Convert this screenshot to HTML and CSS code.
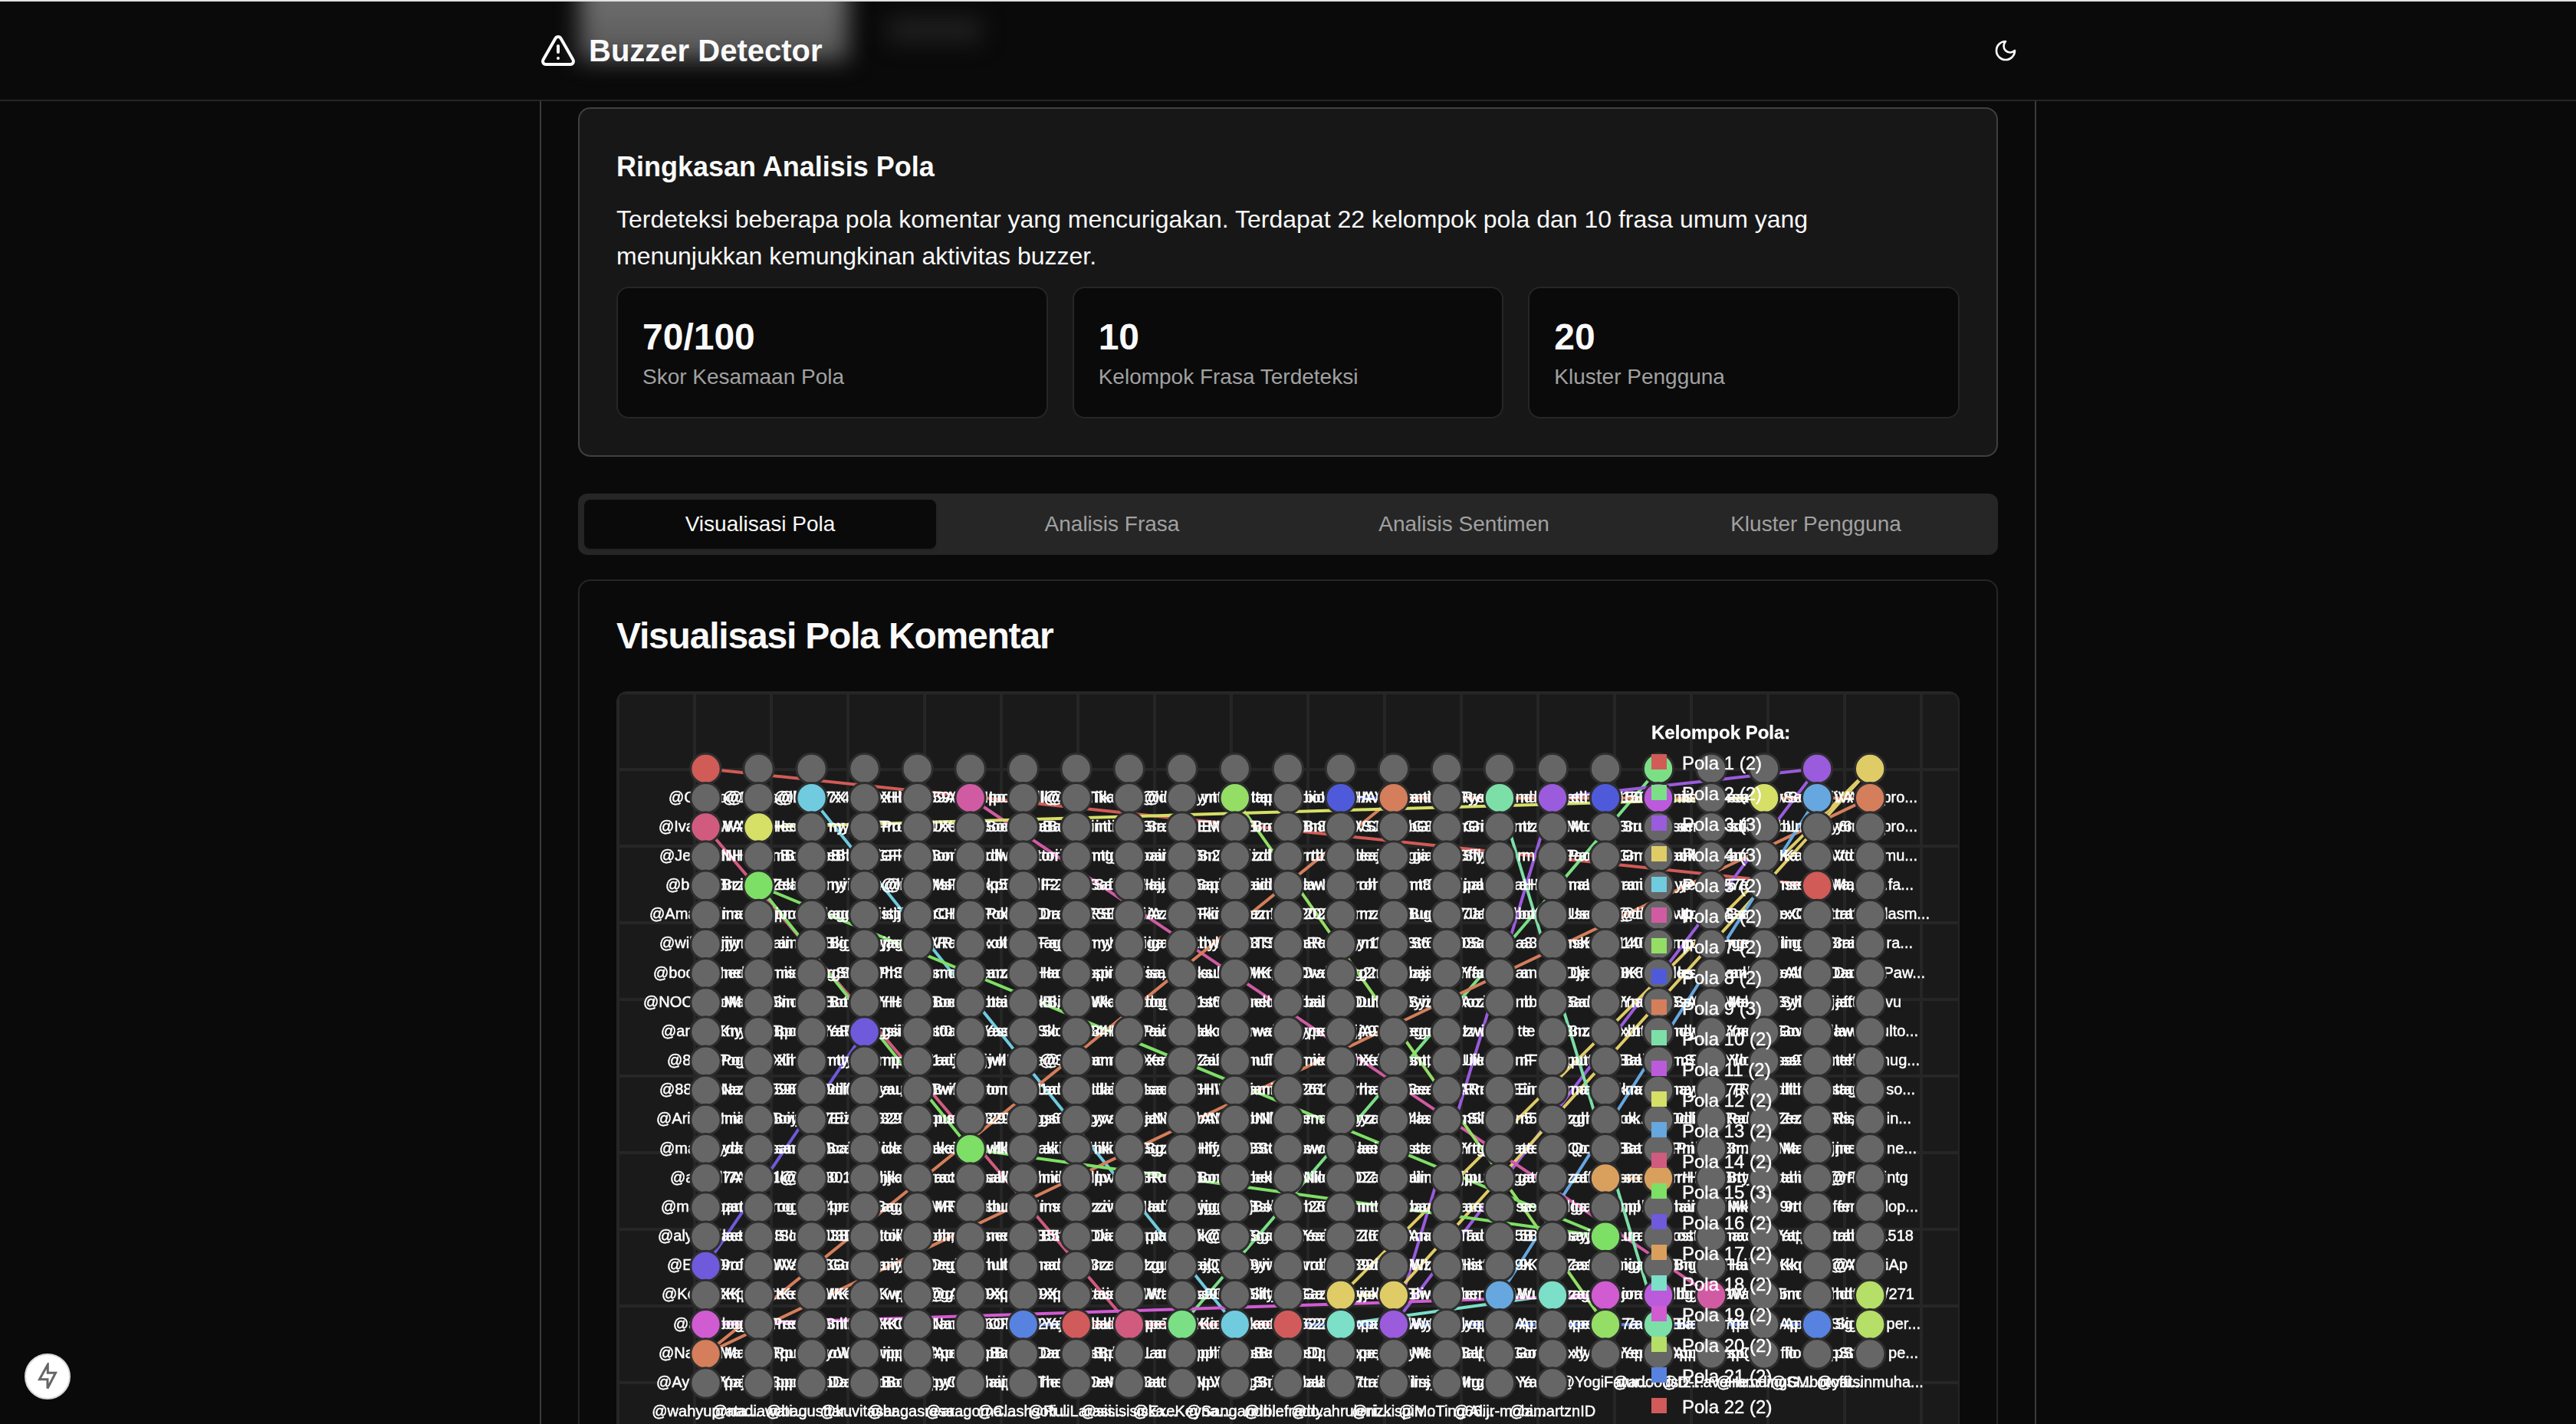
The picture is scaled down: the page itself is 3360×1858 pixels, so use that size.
FILE: index.html
```html
<!DOCTYPE html>
<html lang="id">
<head>
<meta charset="utf-8">
<title>Buzzer Detector</title>
<link rel="stylesheet" href="styles.css">
</head>
<body>
<header class="header">
  <div class="backdrop"><span class="glow glow-button"></span><span class="glow glow-label"></span></div>
  <div class="header-inner">
    <div class="brand">
      <svg class="brand-icon" viewBox="0 0 24 24" fill="none" stroke="currentColor" stroke-width="2" stroke-linecap="round" stroke-linejoin="round"><path d="m21.73 18-8-14a2 2 0 0 0-3.48 0l-8 14A2 2 0 0 0 4 21h16a2 2 0 0 0 1.73-3"/><path d="M12 9v4"/><path d="M12 17h.01"/></svg>
      <span class="brand-name">Buzzer Detector</span>
    </div>
    <button class="theme" aria-label="Tema"><svg viewBox="0 0 24 24" fill="none" stroke="currentColor" stroke-width="2" stroke-linecap="round" stroke-linejoin="round"><path d="M12 3a6 6 0 0 0 9 9 9 9 0 1 1-9-9Z"/></svg></button>
  </div>
</header>
<main class="content">
  <section class="summary">
    <h3 class="summary-title">Ringkasan Analisis Pola</h3>
    <p class="summary-text">Terdeteksi beberapa pola komentar yang mencurigakan. Terdapat 22 kelompok pola dan 10 frasa umum yang menunjukkan kemungkinan aktivitas buzzer.</p>
    <div class="stats">
      <div class="stat"><div class="stat-value">70/100</div><div class="stat-label">Skor Kesamaan Pola</div></div>
      <div class="stat"><div class="stat-value">10</div><div class="stat-label">Kelompok Frasa Terdeteksi</div></div>
      <div class="stat"><div class="stat-value">20</div><div class="stat-label">Kluster Pengguna</div></div>
    </div>
  </section>
  <nav class="tabs">
    <button class="tab tab-active">Visualisasi Pola</button>
    <button class="tab">Analisis Frasa</button>
    <button class="tab">Analisis Sentimen</button>
    <button class="tab">Kluster Pengguna</button>
  </nav>
  <section class="panel">
    <h2 class="panel-title">Visualisasi Pola Komentar</h2>
    <div class="graph"><svg id="graph" class="graph-svg" viewBox="806 904 1748 1200"></svg></div>
  </section>
</main>
<div class="indicator"><svg viewBox="0 0 28 36" fill="none" stroke="#666" stroke-width="3"><path d="M14.3 2.5 3.5 21.8H14V33.5L24.5 13.2H14.3Z"/></svg></div>
<script src="graph.js"></script>
</body>
</html>
```

FILE: styles.css
```css
* { box-sizing: border-box; margin: 0; }
html { background: #0a0a0a; }
body { height: 1858px; overflow: hidden; position: relative; background: #0a0a0a; color: #fafafa; font-family: "Liberation Sans", Arial, sans-serif; }
button { font: inherit; color: inherit; background: none; border: 0; padding: 0; }
.header { position: relative; height: 132px; border-top: 2px solid #dfe3e3; border-bottom: 2px solid #262626; }
.backdrop { position: absolute; inset: 0; overflow: hidden; }
.glow { position: absolute; }
.glow-button { left: 756px; top: -80px; width: 350px; height: 156px; background: linear-gradient(#6c6c6c 55%, #5e5e5e 80%); filter: blur(15px); }
.glow-label { left: 1158px; top: 20px; width: 122px; height: 34px; background: #1e1e1e; filter: blur(14px); }
.header-inner { position: relative; width: 1952px; height: 128px; margin: 0 auto; display: flex; align-items: center; justify-content: space-between; }
.brand { display: flex; align-items: center; gap: 16px; }
.brand-icon { width: 48px; height: 48px; }
.brand-name { font-size: 40px; font-weight: 700; line-height: 56px; }
.theme { width: 80px; height: 80px; display: flex; align-items: center; justify-content: center; }
.theme svg { width: 32px; height: 32px; }
.content { width: 1952px; height: 1726px; margin: 0 auto; padding: 8px 48px 0; border: solid #3b3b3b; border-width: 0 2px; overflow: hidden; }
.summary { height: 456px; padding: 48px; border: 2px solid #404040; border-radius: 16px; background: #171717; }
.summary-title { font-size: 36px; line-height: 56px; margin-bottom: 16px; }
.summary-text { font-size: 32px; line-height: 48px; margin-bottom: 16px; }
.stats { display: grid; grid-template-columns: repeat(3, 1fr); gap: 32px; }
.stat { padding: 32px; border: 2px solid #262626; border-radius: 16px; background: #0a0a0a; }
.stat-value { font-size: 48px; font-weight: 700; line-height: 64px; }
.stat-label { font-size: 28px; line-height: 40px; color: #a1a1a1; }
.tabs { display: grid; grid-template-columns: repeat(4, 1fr); height: 80px; margin-top: 48px; padding: 8px; border-radius: 12px; background: #262626; }
.tab { font-size: 28px; line-height: 40px; color: #a1a1a1; border-radius: 8px; }
.tab-active { color: #fafafa; background: #0a0a0a; box-shadow: 0 2px 4px rgba(0,0,0,.1); }
.panel { margin-top: 32px; padding: 48px; border: 2px solid #262626; border-radius: 16px; }
.panel-title { font-size: 48px; line-height: 48px; letter-spacing: -1.2px; margin-bottom: 48px; }
.graph { height: 1204px; border: 2px solid #262626; border-radius: 14px; overflow: hidden; background: #1a1a1a; }
.graph-svg { display: block; width: 1748px; height: 1200px; filter: blur(.6px); }
.grid-line { stroke: #262626; stroke-width: 4; }
.link { stroke-width: 4; }
.node { fill: #666; stroke: #2e2e2e; stroke-width: 3; }
.label { font-size: 20px; fill: #fff; stroke: #fff; stroke-width: .5; }
.center { text-anchor: middle; }
.end { text-anchor: end; }
.legend-title { font-size: 24px; font-weight: 700; fill: #fff; stroke: #fff; stroke-width: .3; }
.legend-text { font-size: 24px; fill: #fff; stroke: #fff; stroke-width: .4; }
.indicator { position: absolute; left: 32px; top: 1766px; width: 60px; height: 60px; border-radius: 50%; background: #fff; border: 2px solid #d8d8d8; display: flex; align-items: center; justify-content: center; }
.indicator svg { width: 28px; height: 36px; }
```

FILE: graph.js
```js
const COLORS = ['#d15b56', '#7bdf86', '#9a5bdc', '#dfcc66', '#70cbdf', '#d15ba3', '#94de66', '#4f5ada', '#d47e5b', '#7cdfa8', '#bb5bdc',
  '#d6df66', '#66a7df', '#d15b7e', '#7edf66', '#6e5ada', '#d9a05d', '#7cdfc8', '#d15bd1', '#b5df66', '#5882df', '#d15b5b'];

// Members of each pattern group as [column, row].
const GROUPS = [
  [[0, 0], [21, 4]], [[18, 0], [9, 19]], [[21, 0], [16, 1], [13, 19]], [[22, 0], [12, 18], [13, 18]], [[2, 1], [10, 19]],
  [[5, 1], [19, 18]], [[10, 1], [17, 19]], [[12, 1], [17, 1]], [[13, 1], [22, 1], [0, 20]], [[15, 1], [18, 19]],
  [[18, 1], [18, 18]], [[1, 2], [20, 1]], [[21, 1], [15, 18]], [[0, 2], [8, 19]], [[1, 4], [5, 13], [17, 16]],
  [[3, 9], [0, 17]], [[17, 14], [18, 14]], [[12, 19], [16, 18]], [[0, 19], [17, 18]], [[22, 18], [22, 19]],
  [[6, 19], [21, 19]], [[7, 19], [11, 19]]
];

// Label heads left of the first column: [text, x].
const HEADS = [['@C', 872], ['@Iva', 859], ['@Je', 860], ['@b', 868], ['@Ama', 847], ['@wil', 860], ['@boo', 852], ['@NOC', 839],
  ['@ar', 862], ['@8', 870], ['@88', 860], ['@Ari', 856], ['@ma', 860], ['@a', 874], ['@ma', 862], ['@aly', 858], ['@E', 870],
  ['@Ke', 863], ['@a', 878], ['@Na', 859], ['@Ay', 856]];
// Label tails right of the last column: [text, right x].
const TAILS = [['pro...', 2501], ['pro...', 2501], ['mu...', 2501], ['.fa...', 2496], ['lasm...', 2517], ['ra...', 2495], ['Paw...', 2511],
  ['vu', 2480], ['ulto...', 2502], ['nug...', 2504], ['so...', 2498], ['in...', 2493], ['ne...', 2500], ['intg', 2489], ['lop...', 2502],
  ['1518', 2496], ['iAp', 2488], ['y/271', 2497], ['per...', 2505], ['pe...', 2502]];

// Visible label parts between neighbouring columns, one line per row.
const PARTS = [
  'o@1 s@lk 7X4 XHl 59A Ipo ll@ Tika @id ynt Itap bio! HAV anti Rye nd eth 158 nis rear vSe iVA',
  'WA Hec my, Pro UXe Soe aBa inti Sra IEM Bro Bn8 VSJ bG8 rGri ntz Mo Sru ser sdi bLr y6r',
  'iNH mBo eBh lGFk Boni rdlw tori mtg oair Sn2 izdl rrtb deaj gia Sfly m Pac Gm ank am Ka Vtd',
  'Brzi Zela nyi x@lr MsF kp5 lF2 Saf Haju Sapi aidi law! roh mt3 jpal aH ma! rani ye 57e nse Ma,',
  'ima iprc kagc istji rCH Pok Dra RSE iAz Fkir azn! 202 mz Bug 7Jat bot Use @dr vIp Gse exC trat',
  'rjiyn ain Big yjag VRa xolt Fag my! iga thyl 3TS aRa yn1 St6 0Sa a3 nsK 140 mp nge ling 3rai',
  'Ined mis rgSt PhS smo anz Har spir isa, ksul MKr, Oval g2r bajs Yfar an Dja 8K6 les anl eAlt Dar',
  'oMa Sino Bot YHa Boe btai kBi, Wka dog 1st6 nelc bail Duh Syiz Aozi nb Sad Yna SsA Mel Syli jaft',
  'Kny, Bpo YaR gsii st0a Yass Slc 34H Paic lako nwai ype jA9 ego Izwi te 3nz xbt ndy Yne Gov law',
  'Pog Xih mty mp 1adj jwl! e@S amr Xer Zai! nufi mie hXel snt, Uile nF put Bal mS Ylo ss9 nteh',
  'Naz 596 9dilt yau, Bwi! tom 1ad Idlai Isae SHIV iami 261 rha Seat ARre Ein ma kna nay 7R dlth stag',
  'Imia Boiy 7Eiz 329 pus 329! gs6 gyva jaNi bAN bNll ema ryza 4las nSil n5 zgh ok. 0dil Rad Zez Ris,',
  'yda san Bcai icle akei wllk aki hiki Sgz Hify BStc swc laei sta Yrtg ate Qo Bat Pni 3m: Ma jne',
  'l7A 1l@. 80.1 hjka ract salk hnid lpv BRo, Bon bek Nilo DZa alim jpu gat zaf sro rrH Brty tahi @rF',
  'qart rog 4pra Baga MR sbur ims zziv Iad yjgg jBsk h26 nnt! bar, are se lga npl hair iMk 9rt fer',
  'laet IS!c J3B Itoik ohr, snec B5t Dia rpta ik@ Sga Yeai ZI6 Ana Tad 5B sayj ura ost nac Yatp trah',
  '9rof WVa BGot aniy. Degi hult nad 3rza Izgu ajQ 9yiv vrob 39d WIz Hist. 9K Zast niga Bng Hai Kkq @A',
  'XKp tKe WKe Kwp @gA 9Xp 9Xp tais IWta ss9C Silty Gaz yjok Biw bem Wu zag jora lbg 9Wai 5mc hdt',
  'bog Prec Snlt. XKO Nan 6OF 2Yaj dald npe7 Kio kaot 622 xpa lWyt lyop Ap xpe 7a Bla Ype Ap Sig',
  'Ma Rpu yoW vipp lApe pBa Dar sBpl Lan pphi sBe eDp xpe, yMa Balp Gor xly Yep App ispQ flo pSt',
  'Ypaj Sppc pDar oBor tpyC haip The- OeM 3atc NpV. gSnj bala 7trai lirsj Mrga Ya'
];
const LAST_ROW = ['@wahyuprata...', '@nadiawati...', '@bagusttar...', '@kuvitasar...', '@bagasresa...', '@aragorna...', '@Clashsofi...',
  '@RuliLarasi...', '@sisisisiska...', '@ExeKeyna...', '@Sangandri...', '@Iblefrado...', '@dyahruleni...', '@rizkispin...', '@MoTing66...',
  '@Alijr-mobi...', '@amartznID'];
const SHORT_ROW = ['@YogiFatur...', '@adoodst2...', '@D-FaveHe...', '@ramdingG...', '@SMbotoffi...', '@yatsinmuha...'];

const NS = 'http://www.w3.org/2000/svg';
const root = document.getElementById('graph');
const cx = c => 920.5 + c * 69.03;
const cy = r => 1003 + r * 38.17;
function add(tag, attrs, text) {
  const el = document.createElementNS(NS, tag);
  for (const k in attrs) el.setAttribute(k, attrs[k]);
  if (text) el.textContent = text;
  root.appendChild(el);
}

for (let x = 806; x <= 2554; x += 100) add('line', { class: 'grid-line', x1: x, x2: x, y1: 904, y2: 2104 });
for (let y = 904; y <= 2104; y += 100) add('line', { class: 'grid-line', x1: 806, x2: 2554, y1: y, y2: y });

const nodeColor = {};
GROUPS.forEach((g, i) => {
  g.forEach(p => { nodeColor[p] = COLORS[i]; });
  for (let a = 0; a < g.length; a++) {
    for (let b = a + 1; b < g.length; b++) {
      add('line', { class: 'link', stroke: COLORS[i], x1: cx(g[a][0]), y1: cy(g[a][1]), x2: cx(g[b][0]), y2: cy(g[b][1]) });
    }
  }
});

PARTS.forEach((line, i) => {
  const y = cy(i) + 43.5;
  line.split(' ').forEach((t, c) => {
    const x = cx(c) + 34.5;
    add('text', { class: 'label center', x: x - 2.5, y }, t);
    add('text', { class: 'label center', x: x + 3.5, y }, t);
  });
  add('text', { class: 'label', x: HEADS[i][1], y }, HEADS[i][0]);
  if (TAILS[i]) add('text', { class: 'label end', x: TAILS[i][1], y }, TAILS[i][0]);
});
SHORT_ROW.forEach((t, i) => add('text', { class: 'label center', x: cx(17 + i), y: cy(20) + 43.5 }, t));

for (let n = 0; n < 500; n++) {
  const c = n % 23, r = Math.floor(n / 23);
  add('circle', { class: 'node', cx: cx(c), cy: cy(r), r: 19.7, style: nodeColor[[c, r]] ? 'fill:' + nodeColor[[c, r]] : '' });
}
LAST_ROW.forEach((t, i) => add('text', { class: 'label center', x: cx(i), y: cy(21) + 43 }, t));

add('text', { class: 'legend-title', x: 2154, y: 964 }, 'Kelompok Pola:');
COLORS.forEach((c, i) => {
  add('rect', { x: 2154, y: 984 + i * 40, width: 20, height: 20, fill: c });
  add('text', { class: 'legend-text', x: 2194, y: 1004 + i * 40 }, `Pola ${i + 1} (${GROUPS[i].length})`);
});
```
